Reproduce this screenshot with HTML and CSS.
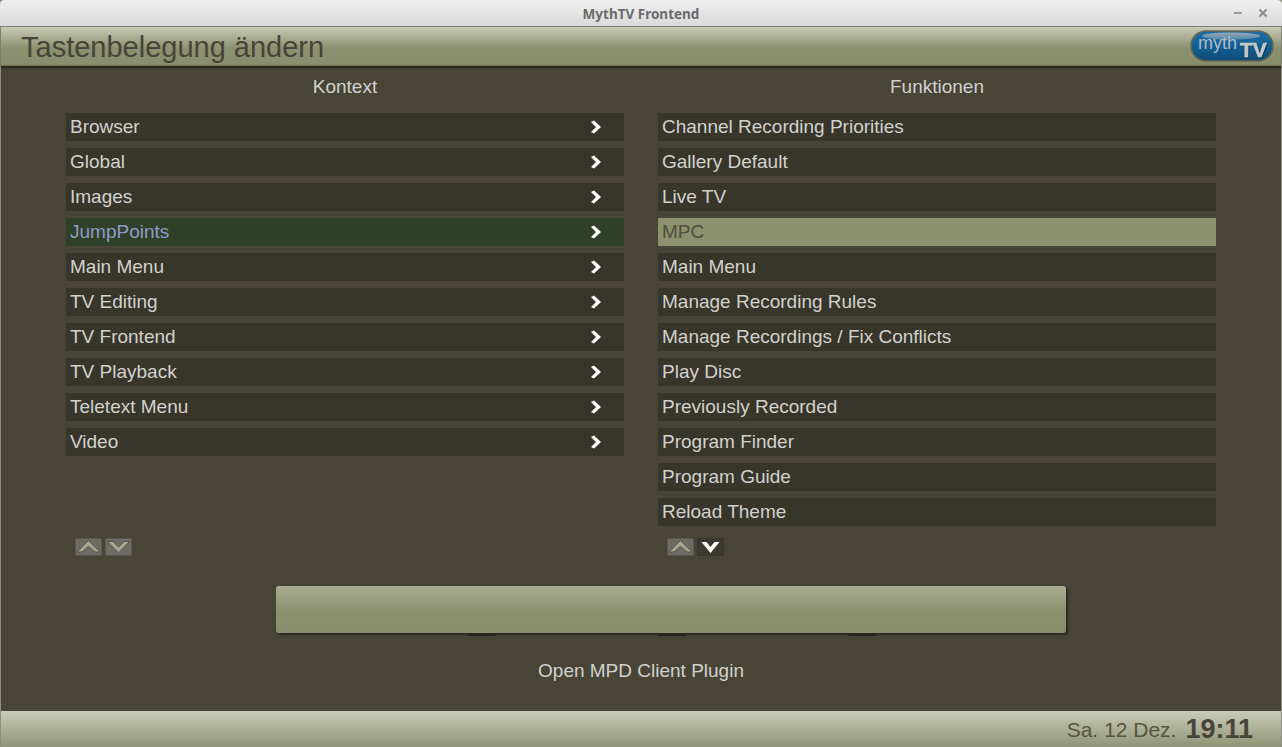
FILE: index.html
```html
<!DOCTYPE html>
<html>
  <head>
    <title>MythTV Frontend</title>
    <link rel="stylesheet" href="styles.css">
  </head>
  <body>
    <div class="window">
      <div class="titlebar">
        <span class="titlebar-name">MythTV Frontend</span>
        <div class="window-btns">
          <svg width="10" height="10" viewBox="0 0 10 10"><rect x="1" y="4" width="8" height="2" fill="#9a9a9a"/></svg>
          <svg width="10" height="10" viewBox="0 0 10 10"><path d="M1.5 1.5L8.5 8.5M8.5 1.5L1.5 8.5" stroke="#8f8f8f" stroke-width="2.2"/></svg>
        </div>
      </div>

      <header class="top-bar">
        <h1>Tastenbelegung ändern</h1>
        <svg class="logo" width="84" height="32" viewBox="0 0 84 32">
          <defs>
            <linearGradient id="logoBlue" x1="0" y1="0" x2="0" y2="1">
              <stop offset="0" stop-color="#1c6ea6"/>
              <stop offset="0.6" stop-color="#125d90"/>
              <stop offset="1" stop-color="#0e4a74"/>
            </linearGradient>
            <linearGradient id="logoShine" x1="0" y1="0" x2="0" y2="1">
              <stop offset="0" stop-color="#98a8b2"/>
              <stop offset="1" stop-color="#4f87ad"/>
            </linearGradient>
          </defs>
          <rect x="1" y="1" width="82" height="30" rx="15" fill="url(#logoBlue)" stroke="#6a664e" stroke-width="1.6"/>
          <ellipse cx="41" cy="6" rx="29" ry="3.6" fill="url(#logoShine)"/>
          <text x="8" y="19" class="logo-myth">myth</text>
          <text x="50" y="27" class="logo-tv">TV</text>
        </svg>
      </header>

      <main class="content">
        <div class="columns">
          <section class="column">
            <h2>Kontext</h2>
            <ul class="list">
              <li class="row"><span>Browser</span><svg class="arrow" width="12" height="14" viewBox="0 0 12 14"><path d="M1 2L4 .5L11 7L4 13.5L1 12L6 7Z"/></svg></li>
              <li class="row"><span>Global</span><svg class="arrow" width="12" height="14" viewBox="0 0 12 14"><path d="M1 2L4 .5L11 7L4 13.5L1 12L6 7Z"/></svg></li>
              <li class="row"><span>Images</span><svg class="arrow" width="12" height="14" viewBox="0 0 12 14"><path d="M1 2L4 .5L11 7L4 13.5L1 12L6 7Z"/></svg></li>
              <li class="row row-active"><span>JumpPoints</span><svg class="arrow" width="12" height="14" viewBox="0 0 12 14"><path d="M1 2L4 .5L11 7L4 13.5L1 12L6 7Z"/></svg></li>
              <li class="row"><span>Main Menu</span><svg class="arrow" width="12" height="14" viewBox="0 0 12 14"><path d="M1 2L4 .5L11 7L4 13.5L1 12L6 7Z"/></svg></li>
              <li class="row"><span>TV Editing</span><svg class="arrow" width="12" height="14" viewBox="0 0 12 14"><path d="M1 2L4 .5L11 7L4 13.5L1 12L6 7Z"/></svg></li>
              <li class="row"><span>TV Frontend</span><svg class="arrow" width="12" height="14" viewBox="0 0 12 14"><path d="M1 2L4 .5L11 7L4 13.5L1 12L6 7Z"/></svg></li>
              <li class="row"><span>TV Playback</span><svg class="arrow" width="12" height="14" viewBox="0 0 12 14"><path d="M1 2L4 .5L11 7L4 13.5L1 12L6 7Z"/></svg></li>
              <li class="row"><span>Teletext Menu</span><svg class="arrow" width="12" height="14" viewBox="0 0 12 14"><path d="M1 2L4 .5L11 7L4 13.5L1 12L6 7Z"/></svg></li>
              <li class="row"><span>Video</span><svg class="arrow" width="12" height="14" viewBox="0 0 12 14"><path d="M1 2L4 .5L11 7L4 13.5L1 12L6 7Z"/></svg></li>
            </ul>
            <div class="scroll-btns">
              <div class="scroll-btn"><svg width="27" height="18" viewBox="0 0 27 18"><path d="M13.5 2.5L25 14H20L13.5 8.5L7 14H2Z"/></svg></div>
              <div class="scroll-btn"><svg width="27" height="18" viewBox="0 0 27 18"><path d="M2.5 3.5H8L13.5 9L19 3.5H24.5L13.5 15Z"/></svg></div>
            </div>
          </section>

          <section class="column">
            <h2>Funktionen</h2>
            <ul class="list">
              <li class="row"><span>Channel Recording Priorities</span></li>
              <li class="row"><span>Gallery Default</span></li>
              <li class="row"><span>Live TV</span></li>
              <li class="row row-selected"><span>MPC</span></li>
              <li class="row"><span>Main Menu</span></li>
              <li class="row"><span>Manage Recording Rules</span></li>
              <li class="row"><span>Manage Recordings / Fix Conflicts</span></li>
              <li class="row"><span>Play Disc</span></li>
              <li class="row"><span>Previously Recorded</span></li>
              <li class="row"><span>Program Finder</span></li>
              <li class="row"><span>Program Guide</span></li>
              <li class="row"><span>Reload Theme</span></li>
            </ul>
            <div class="scroll-btns">
              <div class="scroll-btn"><svg width="27" height="18" viewBox="0 0 27 18"><path d="M13.5 2.5L25 14H20L13.5 8.5L7 14H2Z"/></svg></div>
              <div class="scroll-btn scroll-btn-on"><svg width="27" height="18" viewBox="0 0 27 18"><path d="M4.5 4H9.5L13.5 9L17.5 4H22.5L13.5 15Z"/></svg></div>
            </div>
          </section>
        </div>

        <div class="action-wrap">
          <div class="action-tabs"><i></i><i></i><i></i></div>
          <div class="action-btn"></div>
        </div>
        <p class="description">Open MPD Client Plugin</p>
      </main>

      <footer class="bottom-bar">
        <span class="date">Sa. 12 Dez.</span>
        <span class="time">19:11</span>
      </footer>
    </div>
  </body>
</html>
```

FILE: styles.css
```css
html, body {
  margin: 0;
  padding: 0;
  height: 100%;
  overflow: hidden;
}
body {
  font-family: "Liberation Sans", Arial, sans-serif;
  background-color: #484436;
}
.window {
  height: 747px;
  display: flex;
  flex-direction: column;
  border-left: 1px solid #8d8d85;
  border-right: 1px solid #8d8d85;
  box-sizing: border-box;
}
.titlebar {
  height: 25px;
  flex: none;
  margin: 0 -1px;
  padding-top: 1px;
  display: flex;
  align-items: center;
  justify-content: center;
  position: relative;
  background: linear-gradient(#f0f0f0, #dadada);
  border-top: 1px solid #a8a8a8;
  border-bottom: 1px solid #7c7c70;
  border-radius: 5px 5px 0 0;
  margin-top: -1px;
}
.titlebar-name {
  font-family: "Noto Sans", sans-serif;
  font-weight: 700;
  font-size: 13.5px;
  color: #6b6b6b;
}
.window-btns {
  position: absolute;
  right: 14px;
  top: 8px;
  display: flex;
  gap: 15px;
}
.window-btns svg {
  display: block;
}

.top-bar {
  height: 38px;
  flex: none;
  display: flex;
  align-items: center;
  justify-content: space-between;
  padding: 0 7px 0 20px;
  background: linear-gradient(#c9cbb7, #8c9270 55%, #888e6c);
  border-bottom: 1px solid #6f6f58;
  box-shadow: 0 2px 1px #2c2a20;
  position: relative;
}
.top-bar h1 {
  margin: 0;
  padding-top: 2px;
  font-weight: 400;
  font-size: 29px;
  color: #48443a;
}
.logo {
  display: block;
}
.logo-myth {
  font-family: "Liberation Sans", sans-serif;
  font-size: 18px;
  fill: #aebbc2;
}
.logo-tv {
  font-family: "Liberation Sans", sans-serif;
  font-size: 21px;
  font-weight: 700;
  fill: #c4c8c8;
  stroke: #c4c8c8;
  stroke-width: 0.6;
  filter: drop-shadow(1px 1px 0 #0b3a5c);
}

.content {
  flex: 1;
  display: flex;
  flex-direction: column;
}
.columns {
  display: flex;
  gap: 34px;
  padding: 0 65px;
}
.column {
  width: 558px;
}
.column h2 {
  margin: 0;
  height: 47px;
  padding-top: 10px;
  box-sizing: border-box;
  text-align: center;
  font-weight: 400;
  font-size: 19px;
  line-height: 22px;
  color: #d2d2cd;
}
.list {
  list-style: none;
  margin: 0;
  padding: 0;
  height: 413px;
  display: flex;
  flex-direction: column;
  gap: 7px;
}
.row {
  height: 28px;
  flex: none;
  display: flex;
  align-items: center;
  justify-content: space-between;
  padding: 0 22px 0 4px;
  background-color: #38352b;
  font-size: 19px;
  color: #d2d2cd;
}
.row-active {
  background-color: #303f27;
  color: #8c9cc8;
}
.row-selected {
  background-color: #8c926e;
  color: #4f4d40;
}
.arrow {
  display: block;
  fill: #fff;
}
.scroll-btns {
  display: flex;
  gap: 3px;
  padding: 12px 0 0 9px;
}
.scroll-btn {
  width: 27px;
  height: 18px;
  background-color: #6d6b63;
  border-radius: 2px;
  box-shadow: inset 0 0 0 1px #5a574c;
}
.scroll-btn svg {
  display: block;
}
.scroll-btn path {
  fill: #a3a58f;
  stroke: #57544a;
  stroke-width: 1;
}
.scroll-btn-on {
  background-color: #3c392f;
  box-shadow: inset 0 0 0 1px #38352b;
}
.scroll-btn-on path {
  fill: #fff;
  stroke: none;
}

.action-wrap {
  margin: 30px 0 0 275px;
  width: 790px;
  height: 50px;
  position: relative;
}
.action-btn {
  height: 47px;
  position: relative;
  background: linear-gradient(#a9ad92, #8c926e 55%, #888e6c);
  border-radius: 3px;
  box-shadow: 2px 2px 2px #2c2a20;
}
.action-tabs {
  position: absolute;
  left: 191px;
  top: 44px;
  display: flex;
  gap: 160px;
}
.action-tabs i {
  display: block;
  width: 30px;
  height: 6px;
  background-color: #22211a;
  border-radius: 0 0 3px 3px;
}
.description {
  margin: 24px 0 0;
  text-align: center;
  font-size: 19px;
  line-height: 22px;
  color: #d2d2cd;
}

.bottom-bar {
  height: 36px;
  flex: none;
  display: flex;
  align-items: center;
  justify-content: flex-end;
  gap: 9px;
  padding: 1px 28px 0 0;
  box-sizing: border-box;
  background: linear-gradient(#c9cbb7, #8f9476);
}
.date {
  font-size: 21px;
  color: #57543f;
}
.time {
  font-size: 27px;
  font-weight: 700;
  color: #48443a;
}
```
